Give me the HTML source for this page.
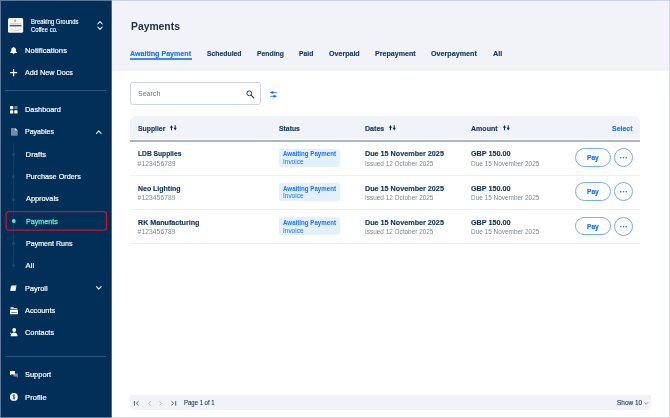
<!DOCTYPE html>
<html lang="en">
<head>
<meta charset="utf-8">
<title>Payments</title>
<style>
*{box-sizing:border-box;margin:0;padding:0}
html,body{width:670px;height:418px;overflow:hidden;background:#fff}
body{font-family:"Liberation Sans",sans-serif;position:relative;color:#12355b;will-change:transform}
.abs,.t,svg{position:absolute}
svg{overflow:visible}
.t{white-space:nowrap;height:10px;line-height:10px;font-size:7.6px;color:#12355b;transform-origin:0 50%}
#side{position:absolute;left:0;top:0;width:112px;height:418px;background:#012f58;border-right:1px solid #4d6d8a;box-shadow:inset -1px 0 0 #00294f}
#side .t{color:#fff}
.co{font-size:6.3px;-webkit-text-stroke:.15px #fff}
.nv{font-size:7.6px;-webkit-text-stroke:.2px currentColor}
.hr{position:absolute;left:5.3px;width:101px;height:1px;background:#2f5479}
.dot{position:absolute;left:12px;width:3px;height:3px;border-radius:50%;background:#204a72}
#frame{position:absolute;left:0;top:0;width:670px;height:418px;border:1px solid rgba(172,182,214,.54);z-index:10}
#head{position:absolute;left:112px;top:0;width:558px;height:71.3px;background:#f1f3f9}
.h1{font-size:11.1px;font-weight:bold;color:#222f3e;height:14px;line-height:14px;margin-top:-2px}
.tab{font-weight:bold;font-size:7.4px;-webkit-text-stroke:.15px currentColor}
.th{font-weight:bold;font-size:7.4px;-webkit-text-stroke:.15px currentColor}
.ph{font-size:7.4px;color:#6b7a90}
.b{font-weight:bold;font-size:7.5px;-webkit-text-stroke:.18px currentColor}
.g{font-size:6.7px;color:#7c8797}
.ft{font-size:6.6px;-webkit-text-stroke:.12px currentColor}
.row{position:absolute;left:130px;width:510px;height:1.4px;background:#eff0f7}
.badge{position:absolute;left:279.2px;width:61.2px;height:18.6px;background:#e3f0ff;border-radius:3px}
.bt1{font-weight:bold;font-size:6.5px;color:#1a73e8}
.bt2{font-size:6.5px;color:#1a73e8}
.pay{position:absolute;left:575.2px;width:35.4px;height:18.7px;border:.9px solid #78adf5;border-radius:10px;background:#fff}
.dots{position:absolute;left:613.9px;width:19px;height:19px;border:.9px solid #78adf5;border-radius:10px;background:#fff}
.dots i{position:absolute;top:8.2px;width:1.5px;height:1.5px;border-radius:50%;background:#1a73e8}
</style>
</head>
<body>
<div id="side">
<svg style="left:8.300px;top:17.600px" width="15.200" height="14.800" viewBox="0 0 15.200 14.400" preserveAspectRatio="none"><rect width="15.200" height="14.400" rx="1.600" fill="#f5f6f8"/><path d="M5.900 1.500h2.300v1.200a1.150 1.150 0 0 1-2.300 0z" fill="#a39a8a" opacity=".75"/><rect x="2.300" y="5.450" width="10.600" height=".6" fill="#8a7f70" opacity=".7"/><rect x="1.700" y="6.900" width="11.800" height="1.250" fill="#2b2b2e" opacity=".85"/><rect x="7" y="9.200" width="1.200" height=".7" fill="#a39a8a" opacity=".6"/><path d="M2.600 10.500q5 3.600 10 0" stroke="#b5a890" stroke-width=".55" fill="none" opacity=".8"/></svg>
<svg style="left:96.6px;top:20.6px" width="6" height="9" viewBox="0 0 6 9"><path d="M.8 3 3 .6 5.2 3M.8 6 3 8.4 5.2 6" fill="none" stroke="#fff" stroke-width="1.05" stroke-linecap="round" stroke-linejoin="round"/></svg>
<!-- bell -->
<svg style="left:10.4px;top:46.7px" width="7.2" height="7" viewBox="0 0 7.2 7"><path d="M3.6 0c.4 0 .6.25.6.55 1.1.3 1.7 1.2 1.7 2.4 0 1.2.4 1.9 1.1 2.5.2.2.1.55-.25.55H.45c-.35 0-.45-.35-.25-.55C.9 4.85 1.3 4.15 1.3 2.95c0-1.2.6-2.1 1.7-2.4C3 .25 3.2 0 3.6 0zM2.7 6.3h1.8a.9.9 0 0 1-1.8 0z" fill="#fff"/></svg>
<!-- plus -->
<svg style="left:10.4px;top:68.9px" width="7.2" height="7.2" viewBox="0 0 7.2 7.2"><path d="M3.6 0v7.2M0 3.6h7.2" stroke="#fff" stroke-width="1.25"/></svg>
<div class="hr" style="top:90px"></div>
<!-- dashboard -->
<svg style="left:10.2px;top:106px" width="7.6" height="7.6" viewBox="0 0 7.6 7.6"><rect width="3.3" height="3.3" rx=".7" fill="#fff"/><rect x="4.3" width="3.3" height="3.3" rx=".7" fill="#fff" opacity=".4"/><rect y="4.3" width="3.3" height="3.3" rx=".7" fill="#fff"/><rect x="4.3" y="4.3" width="3.3" height="3.3" rx=".7" fill="#fff"/></svg>
<!-- payables doc -->
<svg style="left:10.8px;top:128px" width="6.7" height="7.7" viewBox="0 0 6.7 7.7"><path d="M.8 0h3.4v2.5h2.5v4.4a.8.8 0 0 1-.8.8H.8a.8.8 0 0 1-.8-.8V.8A.8.8 0 0 1 .8 0z" fill="#fff" opacity=".45"/><path d="M4.2 0 6.7 2.5H4.2z" fill="#fff"/></svg>
<svg style="left:95.8px;top:129.8px" width="5.6" height="4" viewBox="0 0 5.6 4"><path d="M.5 3.3 2.8.9 5.1 3.3" fill="none" stroke="#e6ecf3" stroke-width="1.15" stroke-linecap="round" stroke-linejoin="round"/></svg>
<!-- submenu line + dots -->
<div class="abs" style="left:13.1px;top:143px;width:.8px;height:124px;background:#143e66"></div>
<div class="dot" style="top:152.9px"></div>
<div class="dot" style="top:175.2px"></div>
<div class="dot" style="top:197.6px"></div>
<svg style="left:11px;top:218px" width="6" height="6" viewBox="0 0 6 6"><circle cx="2.8" cy="3.05" r="1.95" fill="#5fe3c2"/></svg>
<div class="dot" style="top:242.1px"></div>
<div class="dot" style="top:264.4px"></div>
<svg style="left:5px;top:210px" width="103" height="22" viewBox="0 0 103 22"><rect x="1.15" y="1.65" width="100.3" height="18.5" rx="2.6" fill="none" stroke="#c9122e" stroke-width="1.3"/></svg>
<!-- payroll -->
<svg style="left:10.4px;top:285.3px" width="7" height="5.8" viewBox="0 0 7 5.8"><path d="M1.6 0h5.1L5.6 5.8H.3z" fill="#fff" opacity=".55"/><path d="M.9 1.3h5.1L5.4 5.8H.3z" fill="#fff"/></svg>
<svg style="left:95.8px;top:286.3px" width="5.6" height="4" viewBox="0 0 5.6 4"><path d="M.5.7 2.8 3.1 5.1.7" fill="none" stroke="#e6ecf3" stroke-width="1.15" stroke-linecap="round" stroke-linejoin="round"/></svg>
<!-- accounts -->
<svg style="left:10.2px;top:306.5px" width="8" height="7.2" viewBox="0 0 8 7.2"><path d="M1.2 0h2.2l.8 1H6.8a.8.8 0 0 1 .8.8v.6H.4V.8A.8.8 0 0 1 1.200 0z" fill="#fff" opacity=".75"/><path d="M0 3h8v3.4a.8.8 0 0 1-.8.8H.8a.8.8 0 0 1-.8-.8z" fill="#fff"/><rect x="1.3" y="5" width="5.4" height=".8" fill="#012f58" opacity=".7"/></svg>
<!-- contacts -->
<svg style="left:10.4px;top:328px" width="7.6" height="8.2" viewBox="0 0 7.6 8.2"><circle cx="4.2" cy="2" r="1.9" fill="#fff"/><path d="M.6 8.200c0-2.300 1.500-3.700 3.600-3.700s3.400 1.400 3.400 3.700z" fill="#fff"/><path d="M0 5.300h1.600M.8 4.500v1.600" stroke="#fff" stroke-width=".6" opacity=".8"/></svg>
<div class="hr" style="top:356px"></div>
<!-- support -->
<svg style="left:10px;top:371.200px" width="8" height="6.500" viewBox="0 0 8 6.500"><path d="M3.600 2.600h4.200v3.800H6.900v-1H3.600z" fill="#fff" opacity=".5"/><path d="M0 0h4.900v3.500H1.300L0 4.600z" fill="#fff"/></svg>
<!-- profile -->
<svg style="left:10px;top:392.700px" width="7.800" height="7.800" viewBox="0 0 7.800 7.800"><circle cx="3.900" cy="3.900" r="3.900" fill="#fff"/><path d="M5 2.700c-.3-.5-.7-.7-1.200-.7-.7 0-1.100.4-1.100.9 0 1.200 2.400.6 2.400 1.900 0 .6-.5 1-1.200 1-.6 0-1.100-.3-1.300-.8M3.900 1.300v5.200" fill="none" stroke="#012f58" stroke-width=".7"/></svg>

<div class="t co" style="left:30.9px;top:17.4px;transform:scaleX(0.9337)">Breaking Grounds</div>
<div class="t co" style="left:30.9px;top:24.6px;transform:scaleX(0.9268)">Coffee co.</div>
<div class="t nv" style="left:25.1px;top:46.2px;letter-spacing:0.040px">Notifications</div>
<div class="t nv" style="left:25.1px;top:67.6px;transform:scaleX(0.9555)">Add New Docs</div>
<div class="t nv" style="left:25.1px;top:104.7px;transform:scaleX(0.9662)">Dashboard</div>
<div class="t nv" style="left:25.1px;top:126.9px;transform:scaleX(0.9248)">Payables</div>
<div class="t nv" style="left:25.6px;top:150.3px;letter-spacing:0.056px">Drafts</div>
<div class="t nv" style="left:25.6px;top:171.6px;transform:scaleX(0.9546)">Purchase Orders</div>
<div class="t nv" style="left:25.6px;top:194px;transform:scaleX(0.9680)">Approvals</div>
<div class="t nv" style="left:25.6px;top:217.2px;transform:scaleX(0.9447);color:#62e6c6;-webkit-text-stroke:.3px #62e6c6">Payments</div>
<div class="t nv" style="left:25.6px;top:238.5px;transform:scaleX(0.9335)">Payment Runs</div>
<div class="t nv" style="left:25.6px;top:260.8px;letter-spacing:0.049px">All</div>
<div class="t nv" style="left:25.1px;top:284.1px;transform:scaleX(0.9734)">Payroll</div>
<div class="t nv" style="left:25.1px;top:306.4px;transform:scaleX(0.9632)">Accounts</div>
<div class="t nv" style="left:25.1px;top:327.5px;transform:scaleX(0.9710)">Contacts</div>
<div class="t nv" style="left:25.1px;top:370px;transform:scaleX(0.9809)">Support</div>
<div class="t nv" style="left:25.1px;top:393.2px;letter-spacing:0.010px">Profile</div>
</div>
<div id="head"></div>
<div class="abs" style="left:130px;top:58px;width:62px;height:2px;background:#3f89ef"></div>
<div class="abs" style="left:130.100px;top:82.200px;width:131px;height:22.400px;border:1px solid #cdd2e4;border-radius:2.600px;background:#fff"></div>
<svg style="left:245.500px;top:90.100px" width="9" height="9" viewBox="0 0 9 9"><circle cx="3.300" cy="3.300" r="2.400" fill="none" stroke="#1d3b5e" stroke-width="1"/><path d="M5.100 5.100 7.800 7.800" stroke="#1d3b5e" stroke-width="1.100" stroke-linecap="round"/></svg>
<svg style="left:270.200px;top:90.800px" width="6.800" height="7" viewBox="0 0 6.800 7"><path d="M0 1.500h6.800M0 5.300h6.800" stroke="#1a6fe8" stroke-width=".8"/><circle cx="2.400" cy="1.500" r="1.300" fill="#1a6fe8"/><circle cx="4.500" cy="5.300" r="1.300" fill="#1a6fe8"/></svg>
<div class="abs" style="left:130px;top:116px;width:510px;height:23px;background:#f1f3f9;border-radius:6px 6px 0 0"></div>
<div class="abs" style="left:130px;top:140px;width:510px;height:1.8px;background:#a6b5c7"></div>
<svg class="sort" style="left:170px;top:125.400px" width="6.700" height="5.500" viewBox="0 0 6.700 5.500"><path d="M1.5 0 3.050 2.700H2V5.300H1V2.700H-.05zM5.200 5.500 6.850 2.800H5.700V.2H4.700V2.800H3.550z" fill="#0d2b50"/></svg>
<svg class="sort" style="left:389.200px;top:125.400px" width="6.700" height="5.500" viewBox="0 0 6.700 5.500"><path d="M1.5 0 3.050 2.700H2V5.300H1V2.700H-.05zM5.200 5.500 6.850 2.800H5.700V.2H4.700V2.800H3.550z" fill="#0d2b50"/></svg>
<svg class="sort" style="left:502.600px;top:125.400px" width="6.700" height="5.500" viewBox="0 0 6.700 5.500"><path d="M1.5 0 3.050 2.700H2V5.300H1V2.700H-.05zM5.200 5.500 6.850 2.800H5.700V.2H4.700V2.800H3.550z" fill="#0d2b50"/></svg>
<div class="row" style="top:174.6px"></div>
<div class="row" style="top:208.8px"></div>
<div class="row" style="top:243px"></div>
<div class="badge" style="top:148.500px"></div>
<div class="badge" style="top:182.700px"></div>
<div class="badge" style="top:216.900px"></div>
<div class="pay" style="top:148.200px"></div><div class="dots" style="top:148.100px"><svg style="left:4.500px;top:7px" width="9" height="3" viewBox="0 0 9 3"><circle cx="1.800" cy="1.700" r=".8" fill="#1a73e8"/><circle cx="4.500" cy="1.700" r=".8" fill="#1a73e8"/><circle cx="7.200" cy="1.700" r=".8" fill="#1a73e8"/></svg></div>
<div class="pay" style="top:182.400px"></div><div class="dots" style="top:182.300px"><svg style="left:4.500px;top:7px" width="9" height="3" viewBox="0 0 9 3"><circle cx="1.800" cy="1.700" r=".8" fill="#1a73e8"/><circle cx="4.500" cy="1.700" r=".8" fill="#1a73e8"/><circle cx="7.200" cy="1.700" r=".8" fill="#1a73e8"/></svg></div>
<div class="pay" style="top:216.600px"></div><div class="dots" style="top:216.500px"><svg style="left:4.500px;top:7px" width="9" height="3" viewBox="0 0 9 3"><circle cx="1.800" cy="1.700" r=".8" fill="#1a73e8"/><circle cx="4.500" cy="1.700" r=".8" fill="#1a73e8"/><circle cx="7.200" cy="1.700" r=".8" fill="#1a73e8"/></svg></div>
<div class="abs" style="left:130px;top:395px;width:521.400px;height:15.400px;background:#f1f3f9;border-radius:1px 1px 5px 5px"></div>
<svg style="left:134px;top:400.700px" width="5" height="4.800" viewBox="0 0 5 4.800"><path d="M.45 0v4.800" stroke="#3b5676" stroke-width=".9"/><path d="M4.600.3 2.300 2.400 4.600 4.500" fill="none" stroke="#3b5676" stroke-width=".9"/></svg>
<svg style="left:147.800px;top:400.700px" width="3.200" height="4.800" viewBox="0 0 3.200 4.800"><path d="M2.800.3.600 2.400 2.800 4.500" fill="none" stroke="#a9b6c8" stroke-width=".9"/></svg>
<svg style="left:158.800px;top:400.700px" width="3.200" height="4.800" viewBox="0 0 3.200 4.800"><path d="M.4.300 2.600 2.400.4 4.500" fill="none" stroke="#a9b6c8" stroke-width=".9"/></svg>
<svg style="left:170.800px;top:400.700px" width="5.200" height="4.800" viewBox="0 0 5.200 4.800"><path d="M4.700 0v4.800" stroke="#3b5676" stroke-width=".9"/><path d="M.4.300 2.700 2.400.4 4.500" fill="none" stroke="#3b5676" stroke-width=".9"/></svg>
<svg style="left:643.800px;top:401.800px" width="4.400" height="2.800" viewBox="0 0 4.400 2.800"><path d="M.3.300 2.200 2.300 4.100.3" fill="none" stroke="#5b7089" stroke-width=".7"/></svg>

<div class="t h1" style="left:130.6px;top:21.1px;transform:scaleX(0.9328)">Payments</div>
<div class="t tab" style="left:130.3px;top:48.9px;transform:scaleX(0.9602);color:#1a73e8">Awaiting Payment</div>
<div class="t tab" style="left:206.7px;top:48.9px;transform:scaleX(0.9231)">Scheduled</div>
<div class="t tab" style="left:256.6px;top:48.9px;transform:scaleX(0.9226)">Pending</div>
<div class="t tab" style="left:298.8px;top:48.9px;transform:scaleX(0.9161)">Paid</div>
<div class="t tab" style="left:328.6px;top:48.9px;transform:scaleX(0.9580)">Overpaid</div>
<div class="t tab" style="left:375.2px;top:48.9px;transform:scaleX(0.9595)">Prepayment</div>
<div class="t tab" style="left:431.4px;top:48.9px;transform:scaleX(0.9693)">Overpayment</div>
<div class="t tab" style="left:492.9px;top:48.9px;transform:scaleX(0.9838)">All</div>
<div class="t ph" style="left:137.7px;top:88.6px;transform:scaleX(0.9521)">Search</div>
<div class="t th" style="left:137.6px;top:123.7px;transform:scaleX(0.9230)">Supplier</div>
<div class="t th" style="left:279.2px;top:123.7px;transform:scaleX(0.9250)">Status</div>
<div class="t th" style="left:364.8px;top:123.7px;transform:scaleX(0.9583)">Dates</div>
<div class="t th" style="left:470.9px;top:123.7px;transform:scaleX(0.9527)">Amount</div>
<div class="t th" style="left:612.3px;top:123.7px;transform:scaleX(0.9412);color:#1a73e8">Select</div>
<div class="t b" style="left:137.6px;top:148.9px;transform:scaleX(0.8900)">LDB Supplies</div>
<div class="t g" style="left:137.6px;top:158.5px;letter-spacing:0.080px">#123456789</div>
<div class="t bt1" style="left:283px;top:148.9px;transform:scaleX(0.9485)">Awaiting Payment</div>
<div class="t bt2" style="left:283px;top:156.8px;transform:scaleX(0.9947)">Invoice</div>
<div class="t b" style="left:364.8px;top:148.9px;transform:scaleX(0.9605)">Due 15 November 2025</div>
<div class="t g" style="left:364.8px;top:158.5px;transform:scaleX(0.9581)">Issued 12 October 2025</div>
<div class="t b" style="left:470.9px;top:148.9px;transform:scaleX(0.9577)">GBP 150.00</div>
<div class="t g" style="left:470.9px;top:158.5px;transform:scaleX(0.9618)">Due 15 November 2025</div>
<div class="t b" style="left:587px;top:152.7px;transform:scaleX(0.9347);font-size:7.1px;color:#1a73e8">Pay</div>
<div class="t b" style="left:137.6px;top:184.1px;transform:scaleX(0.9296)">Neo Lighting</div>
<div class="t g" style="left:137.6px;top:192.7px;letter-spacing:0.080px">#123456789</div>
<div class="t bt1" style="left:283px;top:184.1px;transform:scaleX(0.9485)">Awaiting Payment</div>
<div class="t bt2" style="left:283px;top:191.0px;transform:scaleX(0.9947)">Invoice</div>
<div class="t b" style="left:364.8px;top:184.1px;transform:scaleX(0.9605)">Due 15 November 2025</div>
<div class="t g" style="left:364.8px;top:192.7px;transform:scaleX(0.9581)">Issued 12 October 2025</div>
<div class="t b" style="left:470.9px;top:184.1px;transform:scaleX(0.9577)">GBP 150.00</div>
<div class="t g" style="left:470.9px;top:192.7px;transform:scaleX(0.9618)">Due 15 November 2025</div>
<div class="t b" style="left:587px;top:186.9px;transform:scaleX(0.9347);font-size:7.1px;color:#1a73e8">Pay</div>
<div class="t b" style="left:137.6px;top:218.3px;transform:scaleX(0.9506)">RK Manufacturing</div>
<div class="t g" style="left:137.6px;top:226.9px;letter-spacing:0.080px">#123456789</div>
<div class="t bt1" style="left:283px;top:218.3px;transform:scaleX(0.9485)">Awaiting Payment</div>
<div class="t bt2" style="left:283px;top:226.2px;transform:scaleX(0.9947)">Invoice</div>
<div class="t b" style="left:364.8px;top:218.3px;transform:scaleX(0.9605)">Due 15 November 2025</div>
<div class="t g" style="left:364.8px;top:226.9px;transform:scaleX(0.9581)">Issued 12 October 2025</div>
<div class="t b" style="left:470.9px;top:218.3px;transform:scaleX(0.9577)">GBP 150.00</div>
<div class="t g" style="left:470.9px;top:226.9px;transform:scaleX(0.9618)">Due 15 November 2025</div>
<div class="t b" style="left:587px;top:222.1px;transform:scaleX(0.9347);font-size:7.1px;color:#1a73e8">Pay</div>
<div class="t ft" style="left:183.5px;top:398px;transform:scaleX(0.9071)">Page 1 of 1</div>
<div class="t ft" style="left:616.8px;top:398px;transform:scaleX(0.9777)">Show 10</div>
<div id="frame"></div>
</body>
</html>
